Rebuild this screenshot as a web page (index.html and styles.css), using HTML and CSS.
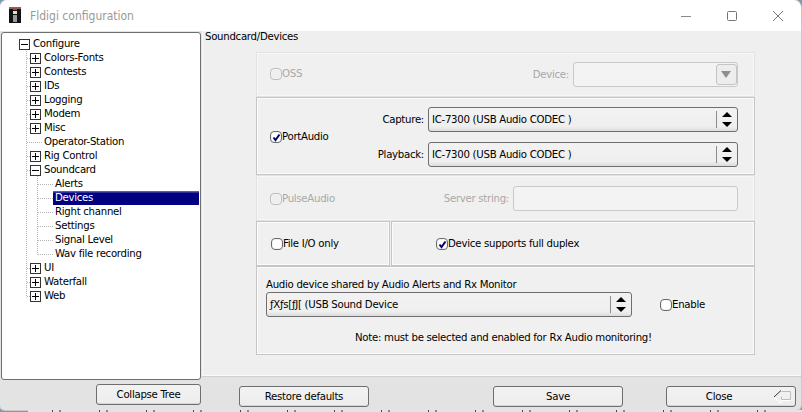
FILE: index.html
```html
<!DOCTYPE html>
<html lang="en">
<head>
<meta charset="utf-8">
<title>Fldigi configuration</title>
<link rel="stylesheet" href="styles.css">
</head>
<body>
<div class="window">
  <header class="titlebar">
    <svg class="appicon" width="12" height="16" viewBox="0 0 12 16">
      <rect width="12" height="16" fill="#111"/>
      <rect x="0" y="0" width="12" height="2" fill="#7a6a60"/>
      <rect x="4" y="1" width="4" height="2" fill="#c23b2e"/>
      <rect x="4" y="4" width="4" height="3" fill="#ddd"/>
      <rect x="4" y="8" width="4" height="7" fill="#999"/>
    </svg>
    <span class="title">Fldigi configuration</span>
    <div class="winctl">
      <svg width="12" height="12" viewBox="0 0 12 12"><path d="M1 6.500h10" stroke="#8a8a8a" fill="none"/></svg>
      <svg width="12" height="12" viewBox="0 0 12 12"><rect x="1.500" y="1.500" width="9" height="9" rx="1" stroke="#777" fill="none"/></svg>
      <svg width="12" height="12" viewBox="0 0 12 12"><path d="M1 1l10 10M11 1L1 11" stroke="#777" fill="none"/></svg>
    </div>
  </header>
  <div class="content">
    <div class="leftcol">
      <div class="tree">
        <svg class="treelines" width="60" height="300" viewBox="0 0 60 300">
          <path d="M24.500 17V263.500M25 24.500h5M25 38.500h5M25 52.500h5M25 66.500h5M25 80.500h5M25 94.500h5M25 108.500h16M25 122.500h5M25 136.500h5M25 234.500h5M25 248.500h5M25 262.500h5M35.500 142V220.500M36 150.500h15M36 164.500h15M36 178.500h15M36 192.500h15M36 206.500h15M36 220.500h15" stroke="#b5b5b5" stroke-dasharray="1 1" fill="none"/>
        </svg>
        <div class="node root"><i class="box minus"></i>Configure</div>
        <div class="node l1"><i class="box plus"></i>Colors-Fonts</div>
        <div class="node l1"><i class="box plus"></i>Contests</div>
        <div class="node l1"><i class="box plus"></i>IDs</div>
        <div class="node l1"><i class="box plus"></i>Logging</div>
        <div class="node l1"><i class="box plus"></i>Modem</div>
        <div class="node l1"><i class="box plus"></i>Misc</div>
        <div class="node l1 leaf">Operator-Station</div>
        <div class="node l1"><i class="box plus"></i>Rig Control</div>
        <div class="node l1"><i class="box minus"></i>Soundcard</div>
        <div class="node l2">Alerts</div>
        <div class="node l2 selected"><span>Devices</span></div>
        <div class="node l2">Right channel</div>
        <div class="node l2">Settings</div>
        <div class="node l2">Signal Level</div>
        <div class="node l2">Wav file recording</div>
        <div class="node l1"><i class="box plus"></i>UI</div>
        <div class="node l1"><i class="box plus"></i>Waterfall</div>
        <div class="node l1"><i class="box plus"></i>Web</div>
      </div>
      <button class="btn collapse">Collapse Tree</button>
    </div>
    <div class="rightcol">
      <main class="panel">
        <div class="paneltitle">Soundcard/Devices</div>
        <div class="groups">
          <section class="group disabled g-oss">
            <label class="check"><i class="cb"></i>OSS</label>
            <div class="field device"><span>Device:</span>
              <div class="combo"><b class="dropbtn"></b></div>
            </div>
          </section>
          <section class="group g-port">
            <label class="check"><i class="cb on"><svg viewBox="0 0 11 11" width="11" height="11"><path d="M2.500 5.500L4.500 8L8.500 2.500" stroke="#000070" stroke-width="2" fill="none"/></svg></i>PortAudio</label>
            <div class="portfields">
              <div class="field"><span>Capture:</span>
                <div class="select wide"><span class="val">IC-7300 (USB Audio CODEC )</span><b class="spin"></b></div>
              </div>
              <div class="field"><span>Playback:</span>
                <div class="select wide"><span class="val">IC-7300 (USB Audio CODEC )</span><b class="spin"></b></div>
              </div>
            </div>
          </section>
          <section class="group disabled g-pulse">
            <label class="check"><i class="cb"></i>PulseAudio</label>
            <div class="field server"><span>Server string:</span><div class="input"></div></div>
          </section>
          <div class="iorow">
            <section class="group g-file"><label class="check"><i class="cb"></i>File I/O only</label></section>
            <section class="group g-duplex"><label class="check"><i class="cb on"><svg viewBox="0 0 11 11" width="11" height="11"><path d="M2.500 5.500L4.500 8L8.500 2.500" stroke="#000070" stroke-width="2" fill="none"/></svg></i>Device supports full duplex</label></section>
          </div>
          <section class="group g-shared">
            <div class="sharedlabel">Audio device shared by Audio Alerts and Rx Monitor</div>
            <div class="sharedrow">
              <div class="select shared"><span class="val">ƒXƒs[ƒJ[ (USB Sound Device</span><b class="spin"></b></div>
              <label class="check"><i class="cb"></i>Enable</label>
            </div>
            <p class="note">Note: must be selected and enabled for Rx Audio monitoring!</p>
          </section>
        </div>
      </main>
      <div class="actions">
        <button class="btn">Restore defaults</button>
        <button class="btn save">Save</button>
        <button class="btn close">Close
          <svg class="enter" width="20" height="16" viewBox="0 0 20 16">
            <path d="M9.500 2.500H18.500V10.500H9.500V7.500" stroke="#bdbdbd" fill="none"/>
            <path d="M2 8.500L9 14.500V11.500H19" stroke="#fff" fill="none"/>
            <path d="M2 8L9 1.500" stroke="#333" fill="none"/>
          </svg>
        </button>
      </div>
    </div>
  </div>
</div>
<div class="under"></div>
</body>
</html>
```
FILE: styles.css
```css
* { box-sizing: border-box; }
html, body { margin: 0; padding: 0; }
body {
  width: 802px; height: 412px; overflow: hidden;
  background: #7f9bb0;
  font: 11.300px/14px "DejaVu Sans", "Liberation Sans", sans-serif;
  font-stretch: condensed;
  letter-spacing: -0.28px;
  color: #000;
}
.window {
  width: 801px; height: 410px;
  background: #e3e3e3;
  border-radius: 8px 8px 5px 5px;
  overflow: hidden;
  box-shadow: 0 0 0 1px #c9c9c9;
}
.under {
  height: 2px; margin-left: 28px;
  background: repeating-linear-gradient(90deg, #e4e4e4 0 24px, #444 24px 25px, #e4e4e4 25px 31px, #888 31px 33px, #e4e4e4 33px 47px);
}
.titlebar {
  height: 31px; background: #fff;
  display: flex; align-items: center; padding: 0 0 0 9px;
}
.appicon { margin-top: -1px; }
.title { margin-left: 9px; color: #999; font-size: 12px; letter-spacing: 0; }
.winctl { margin-left: auto; display: flex; gap: 34px; padding-right: 17px; }
.content { display: grid; grid-template-columns: 202px 1fr; }
.leftcol { padding: 1px 0 0 1px; }
.tree {
  position: relative;
  width: 200px; height: 348px;
  background: #fff;
  border: 1px solid #6e6e6e; border-radius: 3px;
  padding-top: 4px;
}
.treelines { position: absolute; left: 0; top: 1px; }
.node { position: relative; height: 14px; display: flex; align-items: center; white-space: nowrap; }
.root { padding-left: 31px; }
.l1 { padding-left: 42px; }
.l2 { padding-left: 53px; }
.box {
  position: absolute; top: 2px; width: 11px; height: 11px;
  border: 1px solid #333; background: #fff;
}
.root .box { left: 17px; }
.l1 .box { left: 28px; }
.box::before { content: ""; position: absolute; left: 1px; top: 4px; width: 7px; height: 1px; background: #000; }
.plus::after { content: ""; position: absolute; left: 4px; top: 1px; width: 1px; height: 7px; background: #000; }
.selected { padding-left: 51px; }
.selected span {
  flex: 1; height: 14px; margin-right: 1px; padding-left: 2px;
  background: linear-gradient(#5a5ab0 0 1px, #000080 2px);
  color: #fff; line-height: 14px;
}
.btn {
  display: block; font: inherit; letter-spacing: inherit; color: #000; height: 21px; width: 130px; padding: 0;
  background: linear-gradient(#f2f2f2, #ededed);
  border: 1px solid #6e6e6e; border-radius: 3px;
  box-shadow: inset 0 -1px 0 #d6d6d6;
}
.collapse { width: 105px; margin: 4px 0 0 95px; }
.panel {
  height: 345px; background: #efefef;
  border-bottom: 1px solid #fafafa; border-left: 1px solid #f8f8f8;
  box-shadow: 0 1px 0 #cfcfcf;
}
.paneltitle { padding: 0 0 0 2px; height: 21px; line-height: 11px; }
.groups { margin-left: 53px; width: 499px; }
.group {
  border: 1px solid #c6c6c6;
  box-shadow: inset 0 0 0 1px #fbfbfb;
  background: #f0f0f0;
}
.group.disabled { border-color: #e2e2e2; box-shadow: inset 0 0 0 1px #f7f7f7; color: #a8a8a8; }
.check { display: flex; align-items: center; white-space: nowrap; }
.cb {
  width: 12px; height: 12px; border: 1px solid #6a6a6a; border-radius: 4px;
  background: #fff; position: relative; flex: none;
  box-shadow: inset 0 0 0 1px #f3f3f3;
}
.cb svg { position: absolute; left: 0; top: 0; display: block; }
.disabled .cb { border-color: #bdbdbd; background: #efefef; }
.field { display: flex; align-items: center; gap: 4px; white-space: nowrap; }
.g-oss, .g-pulse, .g-port { display: flex; align-items: center; justify-content: space-between; padding: 0 16px 0 13px; }
.g-oss { height: 45px; }
.g-oss .check { margin-top: -1px; }
.g-port { height: 78px; padding-top: 2px; }
.g-pulse { height: 46px; padding-bottom: 0; }
.g-pulse .check { margin-top: 2px; }
.g-pulse .field { margin-top: 1px; }
.portfields { display: flex; flex-direction: column; gap: 10px; align-items: flex-end; }
.combo, .input {
  height: 25px; background: #f3f3f3; border: 1px solid #c9c9c9; border-radius: 3px; position: relative;
}
.combo { width: 165px; }
.input { width: 225px; }
.dropbtn {
  position: absolute; right: 0; top: 1px; width: 21px; height: 21px;
  background: #ededed; border: 1px solid #c4c4c4; border-radius: 3px;
}
.dropbtn::after {
  content: ""; position: absolute; left: 4px; top: 6px;
  border: 5px solid transparent; border-top: 7px solid #8e8e8e; border-bottom: 0;
}
.select {
  height: 25px; position: relative; display: flex; align-items: center;
  background: linear-gradient(#f2f2f2 0, #efefef 80%, #dcdcdc 100%);
  border: 1px solid #6e6e6e; border-radius: 3px;
  padding-left: 3px;
}
.select.wide { width: 310px; }
.select.shared { width: 366px; }
.spin {
  position: absolute; right: 0; top: 3px; bottom: 3px; width: 21px;
  border-left: 1px solid #8c8c8c;
}
.spin::before {
  content: ""; position: absolute; left: 5px; top: 1px;
  border: 4px solid transparent; border-bottom: 5px solid #000; border-top: 0; border-left-width: 5px; border-right-width: 5px;
}
.spin::after {
  content: ""; position: absolute; left: 5px; bottom: 1px;
  border: 4px solid transparent; border-top: 5px solid #000; border-bottom: 0; border-left-width: 5px; border-right-width: 5px;
}
.iorow { display: flex; gap: 1px; }
.g-file, .g-duplex { height: 45px; display: flex; align-items: center; }
.g-file { width: 134px; padding-left: 14px; }
.g-duplex { flex: 1; padding-left: 44px; }
.g-shared { height: 89px; margin-top: 0; padding: 11px 0 0 9px; }
.sharedlabel { height: 14px; }
.sharedrow { display: flex; align-items: center; margin-top: 0; }
.sharedrow .check { margin-left: 28px; }
.note { margin: 14px 0 0 89px; }
.actions { display: flex; margin-top: 10px; padding-left: 37px; }
.actions .btn { padding-top: 1px; }
.save { margin-left: 124px; }
.actions .close { margin-left: 43px; position: relative; padding-right: 24px; }
.enter { position: absolute; right: 3px; top: 2px; }
```
